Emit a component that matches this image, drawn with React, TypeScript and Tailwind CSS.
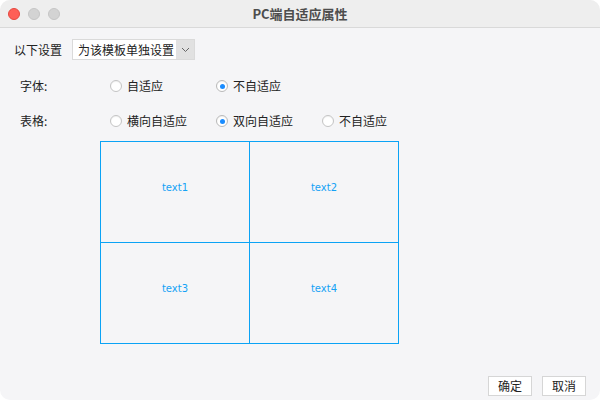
import React from 'react';

const cjk = { fontFamily: '"Noto Sans CJK SC", "Noto Sans", sans-serif' };

const Radio: React.FC<{ label: string; checked?: boolean }> = ({ label, checked }) => (
  <div className="flex w-[106px] items-center gap-[5px]">
    <span
      className={`flex h-[12px] w-[12px] items-center justify-center rounded-full border bg-white shadow-[inset_0_1px_1px_rgba(0,0,0,0.06)] ${
        checked ? 'border-[#b9b9b9]' : 'border-[#c4c4c4]'
      }`}
    >
      {checked && <span className="h-[5px] w-[5px] rounded-full bg-[#1a8cff]" />}
    </span>
    <span className="text-[12px] leading-none text-[#222]">{label}</span>
  </div>
);

const Cell: React.FC<{ text: string }> = ({ text }) => (
  <div
    className="flex h-[101px] items-center justify-center border-b border-r border-[#0ba3f5] pb-[8px] leading-none"
    style={{ fontFamily: '"DejaVu Sans", sans-serif' }}
  >
    <span className="text-[10px] leading-none text-[#14a2f5]">{text}</span>
  </div>
);

const App: React.FC = () => {
  return (
    <div className="h-[400px] w-[600px] bg-white" style={cjk}>
      <div className="flex h-full w-full flex-col overflow-hidden rounded-[10px] bg-[#f5f5f7]">
        {/* title bar */}
        <div className="relative flex h-[28px] shrink-0 items-center justify-center border-b border-[#d9d9d9] bg-[#eeeeee]">
          <div className="absolute left-[8px] top-[8px] flex gap-[8px]">
            <span className="h-[12px] w-[12px] rounded-full bg-[#fe5f57] border border-[#e5483f]" />
            <span className="h-[12px] w-[12px] rounded-full bg-[#d3d3d3] border border-[#c5c5c5]" />
            <span className="h-[12px] w-[12px] rounded-full bg-[#d3d3d3] border border-[#c5c5c5]" />
          </div>
          <span className="text-[13px] font-bold text-[#4d4d4d]">PC端自适应属性</span>
        </div>

        {/* body */}
        <div className="flex flex-1 flex-col">
          <div className="mt-[11px] flex h-[21px] items-center pl-[14px]">
            <span className="w-[58px] text-[12px] text-[#222]">以下设置</span>
            <div className="flex h-[21px] border border-[#dadada] bg-white">
              <span className="flex items-center pl-[5px] pr-[2px] text-[12px] text-[#222]">为该模板单独设置</span>
              <span className="flex w-[18px] items-center justify-center bg-[#e1e1e1]">
                <svg width="9" height="6" viewBox="0 0 9 6" fill="none">
                  <path d="M1 1l3.5 3.5L8 1" stroke="#666" strokeWidth="1" />
                </svg>
              </span>
            </div>
          </div>

          <div className="mt-[16px] flex h-[20px] items-center pl-[20px]">
            <span className="w-[90px] text-[12px] text-[#222]">字体:</span>
            <Radio label="自适应" />
            <Radio label="不自适应" checked />
          </div>

          <div className="mt-[15px] flex h-[20px] items-center pl-[20px]">
            <span className="w-[90px] text-[12px] text-[#222]">表格:</span>
            <Radio label="横向自适应" />
            <Radio label="双向自适应" checked />
            <Radio label="不自适应" />
          </div>

          <div className="ml-[100px] mt-[10px] grid w-[299px] grid-cols-2 border-l border-t border-[#0ba3f5]">
            <Cell text="text1" />
            <Cell text="text2" />
            <Cell text="text3" />
            <Cell text="text4" />
          </div>

          <div className="mt-auto mb-[4px] flex justify-end gap-[10px] pr-[14px]">
            <button className="h-[20px] w-[44px] border border-[#d6d6d6] bg-white text-[12px] leading-none text-[#222]">
              确定
            </button>
            <button className="h-[20px] w-[44px] border border-[#d6d6d6] bg-white text-[12px] leading-none text-[#222]">
              取消
            </button>
          </div>
        </div>
      </div>
    </div>
  );
};

export default App;
